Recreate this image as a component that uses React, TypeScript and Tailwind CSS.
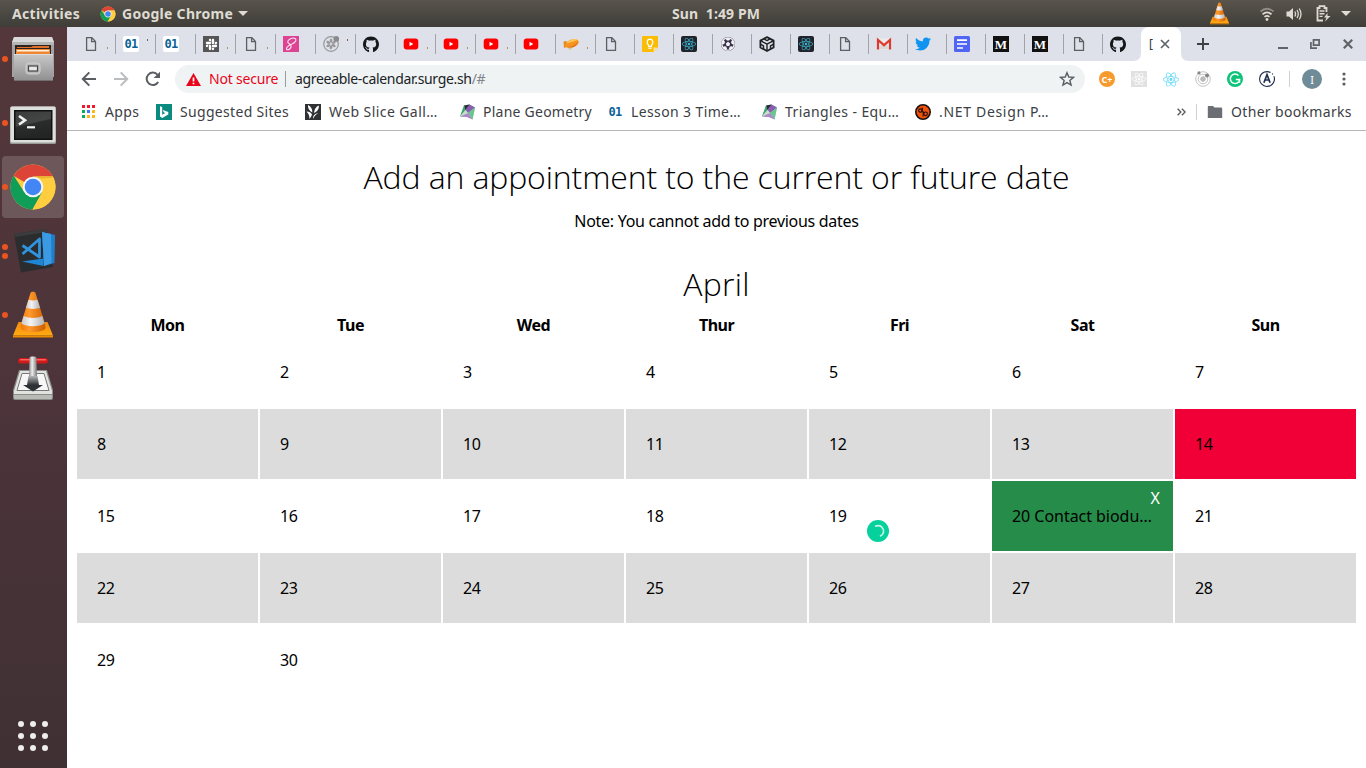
import React from "react";
import { FaGithub, FaReact, FaSlack, FaTwitter, FaFutbol } from "react-icons/fa";

const PageIcon = () => (
  <svg className="size-4" viewBox="0 0 16 16" fill="none" stroke="#5f5f63" strokeWidth="1.3">
    <path d="M3.6 1.7h5.2l3.7 3.8v8.8H3.6z" />
    <path d="M8.6 1.9v3.8h3.8" />
  </svg>
);

const CodeIcon = ({ plain = false }: { plain?: boolean }) => (
  <span
    className={
      plain
        ? "flex size-4 items-center justify-center font-['DejaVu_Sans_Mono','Liberation_Mono',monospace] text-[12px] leading-none font-bold tracking-[-0.7px] text-[#0b6296]"
        : "flex size-4 items-center justify-center rounded-[2px] bg-white font-['DejaVu_Sans_Mono','Liberation_Mono',monospace] text-[12px] leading-none font-bold tracking-[-0.7px] text-[#0b6296]"
    }
  >
    01
  </span>
);

const SlackIcon = () => (
  <span className="flex size-4 items-center justify-center bg-[#555] text-white">
    <FaSlack size={13} />
  </span>
);

const SassIcon = () => (
  <svg className="size-4" viewBox="0 0 16 16">
    <rect width="16" height="16" fill="#dc4393" />
    <path
      d="M12.500 5.300C14 2.500 11 1.300 8 2.600 5 4 3.700 6 5.600 7.300 7.300 8.400 8.800 9.300 8 11.300 7 13.700 4 14.500 3.500 13 3.200 11.500 5.800 9.500 8.500 8.300 10.500 7.400 12 6.700 12.500 5.300Z"
      fill="none"
      stroke="#fbe3f0"
      strokeWidth="1.100"
    />
  </svg>
);

const PinwheelIcon = () => (
  <svg className="size-4" viewBox="0 0 16 16">
    <circle cx="8" cy="8" r="7.3" fill="none" stroke="#97979a" strokeWidth="1.2" />
    <g fill="#97979a">
      {[0, 60, 120, 180, 240, 300].map((a) => (
        <path key={a} transform={`rotate(${a} 8 8)`} d="M8 7.2C6 6 6.400 3.300 8.200 2.600 9.900 3.600 9.700 5.800 8 7.200Z" />
      ))}
    </g>
    <circle cx="13.300" cy="2.900" r="2.900" fill="#8b8b8e" />
  </svg>
);

const GithubIcon = () => <FaGithub size={17} color="#15171a" />;

const YoutubeIcon = () => (
  <svg className="size-4" viewBox="0 0 16 16">
    <rect x="0.700" y="2.400" width="14.600" height="11.200" rx="3" fill="#f00" />
    <path d="M6.500 5.800 10.300 8 6.500 10.200z" fill="#fff" />
  </svg>
);

const ZeppelinIcon = () => (
  <svg className="size-4" viewBox="0 0 16 16">
    <path d="M.5 5.500 3.500 5l1.500 5.500L1 12z" fill="#e58a25" />
    <ellipse cx="9" cy="7.600" rx="7" ry="4" fill="#f7941e" transform="rotate(-20 9 7.600)" />
    <path d="M3.500 7.500C6 3.500 12 2 15 3.800 12 5 8 6.500 3.500 7.500Z" fill="#ffc457" />
    <path d="M3 10.500c4 1 9-.500 12-5-1 4-4 6-7.500 6.200z" fill="#e0701a" />
    <path d="m5 12 4-.5-.6 2H6z" fill="#d9c4a0" />
  </svg>
);

const KeepIcon = () => (
  <svg className="size-4" viewBox="0 0 16 16">
    <path d="M1 0h14a1 1 0 0 1 1 1v10.500L11.500 16H1a1 1 0 0 1-1-1V1a1 1 0 0 1 1-1z" fill="#fbbc04" />
    <path d="M16 11.500 11.500 16v-4.500z" fill="#fde293" />
    <path d="M6.500 10.300V9C4.300 7.500 4.700 3.300 8 3.200c3.300.1 3.700 4.300 1.500 5.800v1.300z" fill="none" stroke="#fff" strokeWidth="1.200" />
    <path d="M6.300 12.200h3.400" stroke="#fff" strokeWidth="1.200" />
  </svg>
);

const ReactIcon = () => (
  <span className="flex size-4 items-center justify-center rounded-[2px] bg-[#20232a] text-[#3fb7d2]">
    <FaReact size={14} />
  </span>
);

const BallIcon = () => (
  <span className="flex size-4 items-center justify-center">
    <span className="flex size-3.5 items-center justify-center rounded-full bg-[#3b3748] text-[#f3f2fa]">
      <FaFutbol size={14} />
    </span>
  </span>
);

const SandboxIcon = () => (
  <svg className="size-4" viewBox="0 0 16 16" fill="none" stroke="#1f2326" strokeWidth="1.800" strokeLinejoin="round">
    <path d="M8 1.100 14.600 4.600v6.900L8 15 1.400 11.500V4.600z" />
    <path d="M1.800 4.800 8 8.200l6.200-3.400M8 8.200V15M5 2.900l3 1.700 3-1.700M1.800 8.300 4.500 9.900v3.200M14.200 8.300l-2.700 1.600v3.200" strokeWidth="1.400" />
  </svg>
);

const GmailIcon = () => (
  <svg className="size-4" viewBox="0 0 16 16">
    <rect x="1" y="2.500" width="14" height="11" rx="1" fill="#eceaea" />
    <path d="m1.500 13 5-5.500L8 9l1.500-1.500 5 5.500z" fill="#dad7d7" />
    <path d="M2 13.500V4l6 5.200L14 4v9.500" fill="none" stroke="#de3b30" strokeWidth="2.200" />
  </svg>
);

const TwitterIcon = () => <FaTwitter size={16} color="#0e93f0" />;

const DocsIcon = () => (
  <svg className="size-4" viewBox="0 0 16 16">
    <rect width="16" height="16" rx="1.500" fill="#5165f5" />
    <path d="M3 4.200h10M3 8h10M3 12h6" stroke="#fff" strokeWidth="1.700" />
  </svg>
);

const MediumIcon = () => (
  <span className="flex size-4 items-center justify-center bg-[#111] font-['Liberation_Serif',serif] text-[13px] leading-none font-bold text-white">
    M
  </span>
);

const ChromeLogo = ({ className }: { className: string }) => (
  <svg className={className} viewBox="0 0 48 48">
    <circle cx="24" cy="24" r="22.500" fill="#ffcd40" />
    <path d="M24 24 4.500 12.750A22.500 22.500 0 0 1 43.900 13.500L24 13.500z" fill="#db4437" />
    <path d="M4.700 12.400A22.500 22.500 0 0 0 23.500 46.500L33 29.500 14.500 28z" fill="#0f9d58" />
    <path d="M23.500 46.500 33.400 29A10.500 10.500 0 0 0 33.500 19L31 13.500h12.900A22.500 22.500 0 0 1 23.500 46.500z" fill="#ffcd40" />
    <path d="M33 15.500 44.500 14.500 43.900 13.500H24z" fill="#e6b52f" />
    <circle cx="24" cy="24" r="10.300" fill="#f4f6f8" />
    <circle cx="24" cy="24" r="8.300" fill="#4285f4" />
  </svg>
);

const VlcCone = ({ className }: { className: string }) => (
  <svg className={className} viewBox="0 0 48 48">
    <defs>
      <linearGradient id="coneOrange" x1="0" x2="1">
        <stop offset="0" stopColor="#f07800" />
        <stop offset=".35" stopColor="#ff9a2e" />
        <stop offset="1" stopColor="#cc5c00" />
      </linearGradient>
      <linearGradient id="coneBase" x1="0" x2="0" y1="0" y2="1">
        <stop offset="0" stopColor="#f28a10" />
        <stop offset="1" stopColor="#ffab12" />
      </linearGradient>
      <linearGradient id="coneWhite" x1="0" x2="1">
        <stop offset="0" stopColor="#c8c8c8" />
        <stop offset=".4" stopColor="#f4f4f4" />
        <stop offset="1" stopColor="#b0b0b0" />
      </linearGradient>
    </defs>
    <path d="M9.500 31h29L44 44.500H4z" fill="url(#coneBase)" />
    <path d="M4 44.500h40v2H4z" fill="#e98a00" />
    <path d="M12 33 21.500 2c.5-1.600 4.500-1.600 5 0L36 33l.5 4c-2 5.500-23 5.500-25 0z" fill="url(#coneOrange)" />
    <path d="M19.500 8.800c3 1 6 1 9 0l2.600 8c-4 1.500-10 1.500-14.200 0z" fill="url(#coneWhite)" />
    <path d="M14.700 25c5 2.500 14 2.500 18.700 0l2.200 7.500c-5 3.500-18 3.500-23.200 0z" fill="url(#coneWhite)" />
  </svg>
);

const FilesIcon = () => (
  <svg className="size-12" viewBox="0 0 48 48">
    <defs>
      <linearGradient id="cabinet" x1="0" x2="0" y1="0" y2="1">
        <stop offset="0" stopColor="#c9c9c9" />
        <stop offset="1" stopColor="#8f8f8f" />
      </linearGradient>
    </defs>
    <path d="M5 2h38l2 6v34H3V8z" fill="#a3a3a3" />
    <path d="M5 2h38l2 5H3z" fill="#d9d9d9" />
    <path d="M3 7h42v3H3z" fill="#b5b5b5" />
    <rect x="6" y="10" width="36" height="10" fill="#2b2320" />
    <path d="M8 12h14l2-1h16v2H8z" fill="#e0702a" />
    <path d="M7 14h34v5H7z" fill="#ef8632" />
    <path d="M8 15h32v1.500H8z" fill="#fff0dc" />
    <rect x="5" y="19" width="39" height="27" rx="1" fill="url(#cabinet)" />
    <path d="M5 19.500h39" stroke="#dedede" />
    <path d="M5 45.500h39" stroke="#6f6f6f" />
    <rect x="17" y="28" width="14" height="11" rx="2.500" fill="#b9b9b9" stroke="#d2d2d2" />
    <rect x="19.500" y="31" width="9" height="5" fill="#e8e8e8" stroke="#444" strokeWidth="1.200" />
  </svg>
);

const TerminalIcon = () => (
  <svg className="size-12" viewBox="0 0 48 48">
    <defs>
      <linearGradient id="screen" x1="0" x2=".3" y1="0" y2="1">
        <stop offset="0" stopColor="#3b3d3c" />
        <stop offset=".5" stopColor="#444645" />
        <stop offset=".55" stopColor="#2b2d2c" />
        <stop offset="1" stopColor="#232524" />
      </linearGradient>
    </defs>
    <rect x="1" y="7.500" width="46" height="37.500" rx="1.500" fill="#989b97" />
    <rect x="1.500" y="7.500" width="45" height="36" rx="1.500" fill="#dddfdc" />
    <rect x="5" y="11" width="38.500" height="30" fill="#111" />
    <rect x="6.500" y="12.500" width="35.500" height="27" fill="url(#screen)" />
    <path d="m10 17 6 4.200-6 4.300" fill="none" stroke="#f2f2f2" strokeWidth="2.600" />
    <path d="M18 28.300h8" stroke="#f2f2f2" strokeWidth="2.200" />
  </svg>
);

const VsCodeIcon = () => (
  <svg className="size-12" viewBox="0 0 48 48">
    <path d="M5 7 37 2l7 38-32 5.500z" fill="#2b2c2e" />
    <path d="M5 7 37 2l.5 3L6 10z" fill="#3b3c3e" />
    <path d="m33 5 13 3-.5 28-10.500 3z" fill="#1f7fcb" />
    <path d="m33 5 9 2 .5 29-7.500 3z" fill="#3a9be4" />
    <path d="m13 34.500 21.500-3V39z" fill="#1f86d3" />
    <path d="m13.500 18.500 17 11.500V12L13.500 27" fill="none" stroke="#2f93dd" strokeWidth="2.800" strokeLinejoin="round" />
  </svg>
);

const TransmissionIcon = () => (
  <svg className="size-12" viewBox="0 0 48 48">
    <defs>
      <linearGradient id="lever" x1="0" x2="1">
        <stop offset="0" stopColor="#8c8c8c" />
        <stop offset=".4" stopColor="#ececec" />
        <stop offset="1" stopColor="#777" />
      </linearGradient>
      <linearGradient id="shaft" x1="0" x2="0" y1="0" y2="1">
        <stop offset="0" stopColor="#b5b5b5" />
        <stop offset="1" stopColor="#2f3234" />
      </linearGradient>
    </defs>
    <path d="M10 15h28l6 20v8q0 2-2 2H6q-2 0-2-2v-8z" fill="#8b8d88" />
    <path d="M11 16h26l6 20v3H5v-3z" fill="#e2e3e0" />
    <path d="M13 18.500h22l5 17H8z" fill="#f7f7f7" stroke="#777" />
    <path d="M5 40h38v2.500q0 1.500-1.500 1.500h-35Q5 44 5 42.500z" fill="#b9bbb6" />
    <rect x="9" y="3" width="30" height="5.500" rx="2.700" fill="#d01919" />
    <path d="M11 4.800h26" stroke="#f77" strokeWidth="1.200" />
    <path d="M20.500 3q0-1.500 2-1.500h3q2 0 2 1.500l.5 20h-8z" fill="url(#lever)" />
    <path d="M19.500 21h9l1.500 9h-12z" fill="url(#shaft)" />
    <path d="M14 30h20l-10 6.500z" fill="#2f3234" />
  </svg>
);

const tabs: { icon: React.ReactNode; wide: boolean; stub?: string }[] = [
  { icon: <PageIcon />, wide: true, stub: "low" },
  { icon: <CodeIcon />, wide: true, stub: "high" },
  { icon: <CodeIcon />, wide: true },
  { icon: <SlackIcon />, wide: true, stub: "low" },
  { icon: <PageIcon />, wide: true, stub: "low" },
  { icon: <SassIcon />, wide: true },
  { icon: <PinwheelIcon />, wide: true, stub: "high" },
  { icon: <GithubIcon />, wide: true },
  { icon: <YoutubeIcon />, wide: true, stub: "low" },
  { icon: <YoutubeIcon />, wide: true, stub: "low" },
  { icon: <YoutubeIcon />, wide: true, stub: "low" },
  { icon: <YoutubeIcon />, wide: true },
  { icon: <ZeppelinIcon />, wide: true, stub: "low" },
  { icon: <PageIcon />, wide: false },
  { icon: <KeepIcon />, wide: false },
  { icon: <ReactIcon />, wide: false },
  { icon: <BallIcon />, wide: false },
  { icon: <SandboxIcon />, wide: false },
  { icon: <ReactIcon />, wide: false },
  { icon: <PageIcon />, wide: false },
  { icon: <GmailIcon />, wide: false },
  { icon: <TwitterIcon />, wide: false },
  { icon: <DocsIcon />, wide: false },
  { icon: <MediumIcon />, wide: false },
  { icon: <MediumIcon />, wide: false },
  { icon: <PageIcon />, wide: false },
  { icon: <GithubIcon />, wide: false },
];

const TopBar = () => (
  <header className="flex h-[27px] items-center bg-linear-to-b from-[#59554d] to-[#3f3d38] text-[14px] font-bold text-[#dfdbd2]">
    <div className="w-[100px] pl-3 tracking-[0.3px]">Activities</div>
    <ChromeLogo className="size-4" />
    <div className="ml-1.5 w-[112px] tracking-[0.28px] whitespace-nowrap">Google Chrome</div>
    <svg className="ml-1 h-[5px] w-[10px]" viewBox="0 0 10 5"><path d="M0 0h10L5 5z" fill="#dfdbd2" /></svg>
    <div className="ml-[424px] w-[90px] whitespace-pre tracking-[0.12px]">Sun  1:49 PM</div>
    <div className="ml-auto flex items-center">
      <VlcCone className="mr-[28px] size-[23px]" />
      <svg className="mr-[11px] h-4 w-[16px]" viewBox="0 0 16 16" fill="none" stroke="#dfdbd2" strokeWidth="1.700">
        <path d="M1.500 5.500Q8 0 14.500 5.500" opacity=".45" />
        <path d="M3.500 8.300Q8 4.500 12.500 8.300" />
        <path d="M5.500 10.900Q8 9 10.500 10.900" />
        <circle cx="8" cy="13.500" r="1.400" fill="#dfdbd2" stroke="none" />
      </svg>
      <svg className="mr-[14px] h-4 w-[16px]" viewBox="0 0 16 16" fill="none" stroke="#dfdbd2" strokeWidth="1.300">
        <path d="M.5 5.500h2.500L7 2v12L3 10.500H.5z" fill="#dfdbd2" stroke="none" />
        <path d="M8.800 5.500q1.500 2.500 0 5M11 4q2.600 4 0 8M13.200 2.500q3.600 5.500 0 11" />
      </svg>
      <svg className="mr-[10px] h-[17px] w-[15px]" viewBox="0 0 15 17" fill="none" stroke="#dfdbd2">
        <path d="M7 15.500H1.500V3h2V1.200h5V3h2v4" strokeWidth="1.800" />
        <path d="M3.500 6h5M3.500 8.700h5M3.500 11.400h3" strokeWidth="1.400" />
        <path d="M11.500 8 8 12.500h2.500L9 16.500l5.500-5.500h-3z" fill="#dfdbd2" stroke="none" />
      </svg>
      <svg className="mr-[15px] h-[5px] w-[10px]" viewBox="0 0 10 5"><path d="M0 0h10L5 5z" fill="#dfdbd2" /></svg>
    </div>
  </header>
);

const dockItems = [
  { icon: <FilesIcon />, dots: 1, active: false },
  { icon: <TerminalIcon />, dots: 1, active: false },
  { icon: <ChromeLogo className="size-12" />, dots: 1, active: true },
  { icon: <VsCodeIcon />, dots: 2, active: false },
  { icon: <VlcCone className="size-12" />, dots: 1, active: false },
  { icon: <TransmissionIcon />, dots: 0, active: false },
];

const Dock = () => (
  <nav className="flex w-[67px] shrink-0 flex-col bg-linear-to-b from-[#53373a] via-[#4c343a] to-[#3f3034]">
    {dockItems.map((item, i) => (
      <div key={i} className="flex h-16 items-center pl-0.5">
        <div className={item.active ? "flex h-[62px] w-[62px] items-center rounded-[4px] bg-white/17" : "flex h-[62px] w-[62px] items-center"}>
          <div className="flex w-[7px] flex-col gap-[3px]">
            {Array.from({ length: item.dots }, (_, d) => (
              <span key={d} className="size-[6px] rounded-full bg-[#e95420]" />
            ))}
          </div>
          {item.icon}
        </div>
      </div>
    ))}
    <div className="mt-auto mb-[17px] ml-[18px] grid w-[30px] grid-cols-3 gap-[6px]">
      {Array.from({ length: 9 }, (_, i) => (
        <span key={i} className="size-[6px] rounded-full bg-[#eeeeec]" />
      ))}
    </div>
  </nav>
);

const TabStrip = () => (
  <div className="flex h-[34px] bg-[#dee1e9] pl-2">
    {tabs.map((tab, i) => (
      <div
        key={i}
        className={tab.wide ? "flex w-10 shrink-0 items-center overflow-hidden" : "flex w-[39px] shrink-0 items-center overflow-hidden"}
      >
        <span className={i === 0 ? "h-5 w-px" : "h-5 w-px bg-[#a0a3a8]"} />
        <span className="ml-[7px] flex size-4 items-center justify-center">{tab.icon}</span>
        {tab.stub && <span className={tab.stub === "low" ? "mt-2 ml-2 h-[2px] w-px bg-[#b98b5f]" : "mb-2 ml-2 h-[2px] w-px bg-[#8a5b4a]"} />}
      </div>
    ))}
    <div className="relative flex w-10 shrink-0 items-center rounded-t-lg bg-white pl-2">
      <svg className="absolute bottom-0 -left-2 size-2" viewBox="0 0 8 8"><path d="M8 0v8H0q8 0 8-8z" fill="#fff" /></svg>
      <svg className="absolute -right-2 bottom-0 size-2" viewBox="0 0 8 8"><path d="M0 0v8h8Q0 8 0 0z" fill="#fff" /></svg>
      <span className="w-[11px] text-[12px] leading-none text-[#35363a]">[</span>
      <svg className="size-[10px]" viewBox="0 0 10 10"><path d="m1 1 8 8M9 1 1 9" stroke="#5f6368" strokeWidth="1.700" /></svg>
    </div>
    <div className="flex grow items-center">
      <svg className="ml-4 size-3" viewBox="0 0 12 12"><path d="M6 0v12M0 6h12" stroke="#3c4043" strokeWidth="1.900" /></svg>
      <svg className="ml-auto h-[10px] w-[10px]" viewBox="0 0 10 10"><path d="M0 9h10" stroke="#5f6368" strokeWidth="2" /></svg>
      <svg className="ml-[22px] h-[10px] w-[10px]" viewBox="0 0 10 10" fill="none" stroke="#5f6368" strokeWidth="1.700">
        <path d="M3.500 .9h5.600v5.200H3.500zM.9 3v6.100H7" />
      </svg>
      <svg className="mr-[13px] ml-[23px] size-[10px]" viewBox="0 0 10 10"><path d="m.8.8 8.400 8.400M9.200.8.800 9.200" stroke="#5f6368" strokeWidth="2.200" /></svg>
    </div>
  </div>
);

const Toolbar = () => (
  <div className="flex h-9 items-center">
    <svg className="ml-[14px] size-4" viewBox="0 0 16 16" fill="none" stroke="#5a5e63" strokeWidth="2"><path d="M15 8H2M8.300 1.400 1.800 8l6.500 6.600" /></svg>
    <svg className="ml-4 size-4" viewBox="0 0 16 16" fill="none" stroke="#babcbe" strokeWidth="2"><path d="M1 8h13M7.700 1.400 14.200 8l-6.500 6.600" /></svg>
    <svg className="ml-4 size-4" viewBox="0 0 16 16"><path d="M13.200 11A6.200 6.200 0 1 1 12.600 3.800" fill="none" stroke="#5a5e63" strokeWidth="2" /><path d="M15 .8v6.300H8.700z" fill="#5a5e63" /></svg>
    <div className="ml-[14px] flex h-7 w-[910px] items-center rounded-full bg-[#eff3f4] text-[14px]">
      <svg className="ml-[11px] h-[13px] w-[15px]" viewBox="0 0 15 13"><path d="M7.500 0 15 13H0z" fill="#e8051b" /><path d="M7.500 4.500v4M7.500 9.700v1.600" stroke="#fff" strokeWidth="1.700" /></svg>
      <span className="ml-2 w-[76px] -translate-y-px tracking-[-0.2px] whitespace-nowrap text-[#e8051b]">Not secure</span>
      <span className="h-4 w-px bg-[#9a9da0]" />
      <span className="ml-[9px] -translate-y-px tracking-[-0.32px] whitespace-nowrap text-[#202124]">agreeable-calendar.surge.sh<span className="text-[#80868b]">/#</span></span>
      <svg className="mr-[10px] ml-auto size-4" viewBox="0 0 24 24" fill="none" stroke="#5a5e63" strokeWidth="2.100"><path d="m12 2.500 2.700 6.600 7.100.5-5.500 4.600 1.800 6.900-6.100-3.800-6.100 3.800 1.800-6.900L2.200 9.600l7.100-.5z" /></svg>
    </div>
    <div className="ml-[14px] flex gap-4">
      <span className="flex size-4 items-center justify-center rounded-full bg-[#f79a2e] text-[9px] leading-none font-bold text-white">C+</span>
      <span className="flex size-4 items-center justify-center bg-[#e1e1e1] text-white"><FaReact size={14} /></span>
      <span className="flex size-4 items-center justify-center text-[#5fd9fa]"><FaReact size={17} /></span>
      <svg className="size-4" viewBox="0 0 16 16" fill="none" stroke="#b5b5b5">
        <circle cx="8" cy="8" r="7.300" strokeWidth=".8" /><circle cx="8" cy="8" r="4.800" strokeWidth=".8" />
        <circle cx="8" cy="8" r="2.300" fill="#bdbdbd" /><circle cx="4" cy="1.900" r="1.600" fill="#858585" stroke="none" /><circle cx="12" cy="4.600" r="2" fill="#858585" stroke="none" />
      </svg>
      <svg className="size-4" viewBox="0 0 16 16"><circle cx="8" cy="8" r="8" fill="#0cc378" /><path d="M11.500 4.600A4.700 4.700 0 1 0 12.700 8.500H8.800M12.500 8.500v3.300" fill="none" stroke="#fff" strokeWidth="1.500" /></svg>
      <svg className="size-4" viewBox="0 0 16 16" fill="none" stroke="#22304f">
        <path d="M14.900 5.300A7.400 7.400 0 1 1 11.500 1.500" strokeWidth="1.100" /><circle cx="13.500" cy="2.900" r=".7" fill="#22304f" stroke="none" />
        <path d="m4.900 11.700 3.100-8 3.100 8M6.500 9h3.200" strokeWidth="1.700" />
      </svg>
    </div>
    <span className="ml-[14px] h-4 w-px bg-[#cfd1d3]" />
    <span className="ml-3 flex size-5 items-center justify-center rounded-full bg-[#6f8b98] text-[11px] leading-none text-white">I</span>
    <svg className="ml-[20px] h-[14px] w-1" viewBox="0 0 4 14" fill="#5a5e63"><circle cx="2" cy="2" r="1.600" /><circle cx="2" cy="7" r="1.600" /><circle cx="2" cy="12" r="1.600" /></svg>
  </div>
);

const AppsGrid = () => (
  <svg className="size-4" viewBox="0 0 16 16">
    {["#f01a2c", "#f01a2c", "#f01a2c", "#0da95f", "#3b7ded", "#f9b916", "#0da95f", "#f9b916", "#f9b916"].map((c, i) => (
      <rect key={i} x={2 + (i % 3) * 5} y={1 + Math.floor(i / 3) * 5} width="3" height="3" fill={c} />
    ))}
  </svg>
);

const BingIcon = () => (
  <svg className="size-4" viewBox="0 0 16 16"><rect width="16" height="16" fill="#0b8a80" /><path d="m4 2.300 2.200.8v7.600l3-1.700-1.500-.7-1-2.300L12.300 8v2.500l-6 3.400L4 12.600z" fill="#fff" /></svg>
);

const FlowerIcon = () => (
  <svg className="size-4" viewBox="0 0 16 16">
    <rect width="16" height="16" fill="#2f3234" />
    <path d="M3 1q4.500 2 4.300 7.500Q2.500 6 3 1zM14 1.500Q9.500 3 9 9q5-2 5-7.500z" fill="#fff" />
    <path d="M1.500 7.500q4 0 5.500 3-.5 2.500-3 4.500Q5.500 12 1.500 7.500zM13.500 9Q10 10.500 8 15q-.5-5 5.500-6z" fill="#fff" />
  </svg>
);

const GemIcon = () => (
  <svg className="size-4" viewBox="0 0 16 16">
    <path d="M5 1.500 10.500.5 16 3.500l-2.500 12L8 13l-7-.5z" fill="#8fd6a8" />
    <path d="M5 1.500 10.500.5 12 4 6 6z" fill="#2c2b33" />
    <path d="M5 1.500 1 12.500l5.500-6.500z" fill="#3fa373" />
    <path d="M10.500.5 16 3.500 9 9 6.500 5.500z" fill="#8a5db0" />
    <path d="M16 3.500 9 9l4.500 6.500z" fill="#6cc590" />
    <path d="M1 12.500 9 9l4.500 6.500-5.500-2.500z" fill="#b184cf" />
    <path d="M1 12.500 6.500 6 9 9z" fill="#c9dccf" />
  </svg>
);

const NetIcon = () => (
  <svg className="size-4" viewBox="0 0 16 16" fill="none" stroke="#1b120e"><circle cx="8" cy="8" r="7.200" fill="#f4510b" strokeWidth="1.600" /><circle cx="5.300" cy="6.600" r="1.700" strokeWidth="1.100" /><circle cx="10.600" cy="9.800" r="1.800" strokeWidth="1.100" /><path d="M7.300 3.500v5M8.500 7.500 8 12.500" strokeWidth="1.100" /></svg>
);

const BookmarksBar = () => (
  <div className="flex h-[34px] items-center border-b border-[#b4b6b8] pb-[3px] pl-[13px] text-[14px] whitespace-nowrap text-[#3c4043]">
    <div className="flex w-[76px] items-center gap-[9px] tracking-[0.35px]"><AppsGrid /><span className="-translate-y-px">Apps</span></div>
    <div className="flex w-[149px] items-center gap-2 tracking-[0.32px]"><BingIcon /><span className="-translate-y-px">Suggested Sites</span></div>
    <div className="flex w-[154px] items-center gap-2 tracking-[0.42px]"><FlowerIcon /><span className="-translate-y-px">Web Slice Gall…</span></div>
    <div className="flex w-[148px] items-center gap-2 tracking-[0.24px]"><GemIcon /><span className="-translate-y-px">Plane Geometry</span></div>
    <div className="flex w-[154px] items-center gap-2 tracking-[0.38px]"><CodeIcon plain /><span className="-translate-y-px">Lesson 3 Time…</span></div>
    <div className="flex w-[154px] items-center gap-2 tracking-[0.4px]"><GemIcon /><span className="-translate-y-px">Triangles - Equ…</span></div>
    <div className="flex items-center gap-2 tracking-[0.68px]"><NetIcon /><span className="-translate-y-px">.NET Design P…</span></div>
    <svg className="ml-auto h-2 w-[9px]" viewBox="0 0 9 8" fill="none" stroke="#5a5e63" strokeWidth="1.400"><path d="m.6.7 3.200 3.300L.6 7.300M4.900.7l3.200 3.300-3.200 3.300" /></svg>
    <span className="ml-[10px] h-4 w-px bg-[#cfd1d3]" />
    <svg className="ml-[10px] h-[12px] w-[16px]" viewBox="0 0 16 12"><path d="M1.500 0H6l1.500 1.600h6.500q1.200 0 1.200 1.200V12H.8V.8Q.8 0 1.500 0z" fill="#6b6f73" /></svg>
    <span className="ml-[8px] w-[135px] -translate-y-px tracking-[0.33px]">Other bookmarks</span>
  </div>
);

const days = ["Mon", "Tue", "Wed", "Thur", "Fri", "Sat", "Sun"];

const cellClass = (day: number) => {
  if (day === 14) return "flex h-[70px] items-center bg-[#f00037] pl-5";
  if (day === 20) return "relative flex h-[70px] items-center bg-[#258c4a] pl-5";
  if ((day >= 8 && day <= 13) || (day >= 22 && day <= 28)) return "flex h-[70px] items-center bg-[#dcdcdc] pl-5";
  return "relative flex h-[70px] items-center pl-5";
};

const Calendar = () => (
  <main className="flex grow flex-col items-center bg-white text-[16px] text-black">
    <h1 className="mt-[22px] h-12 font-['Open_Sans','Noto_Sans',sans-serif] text-[32px] leading-[48px] font-light tracking-[-0.13px] whitespace-nowrap">
      Add an appointment to the current or future date
    </h1>
    <p className="mt-[8px] h-6 leading-6 tracking-[-0.29px]">Note: You cannot add to previous dates</p>
    <h2 className="mt-[27px] h-12 font-['Open_Sans','Noto_Sans',sans-serif] text-[32px] leading-[48px] font-light tracking-[0.3px]">April</h2>
    <div className="mt-[5px] grid w-[1279px] grid-cols-7 gap-x-[2px]">
      {days.map((d) => (
        <div key={d} className="h-6 text-center leading-6 font-bold tracking-[-0.5px]">{d}</div>
      ))}
    </div>
    <div className="grid w-[1279px] grid-cols-7 gap-[2px]">
      {Array.from({ length: 30 }, (_, i) => i + 1).map((day) => (
        <div key={day} className={cellClass(day)}>
          <span className={day === 20 ? "tracking-[-0.04px] whitespace-nowrap" : "tracking-[-0.3px]"}>{day === 20 ? "20 Contact biodu…" : day}</span>
          {day === 20 && <span className="absolute top-[5px] right-[13px] leading-6 text-white">X</span>}
          {day === 19 && (
            <svg className="absolute top-[39px] left-[58px] size-[22px]" viewBox="0 0 22 22">
              <circle cx="11" cy="11" r="11" fill="#06d19c" />
              <path d="M8 6.200Q14 4 16.300 9.500 17.500 14 13 16.300" fill="none" stroke="#c6f5e8" strokeWidth="1.600" />
            </svg>
          )}
        </div>
      ))}
    </div>
  </main>
);

export default function App() {
  return (
    <div className="flex h-[768px] w-[1366px] flex-col overflow-hidden bg-white font-['Noto_Sans','Open_Sans',sans-serif]">
      <TopBar />
      <div className="flex min-h-0 grow">
        <Dock />
        <div className="flex w-[1299px] flex-col">
          <TabStrip />
          <Toolbar />
          <BookmarksBar />
          <Calendar />
        </div>
      </div>
    </div>
  );
}
